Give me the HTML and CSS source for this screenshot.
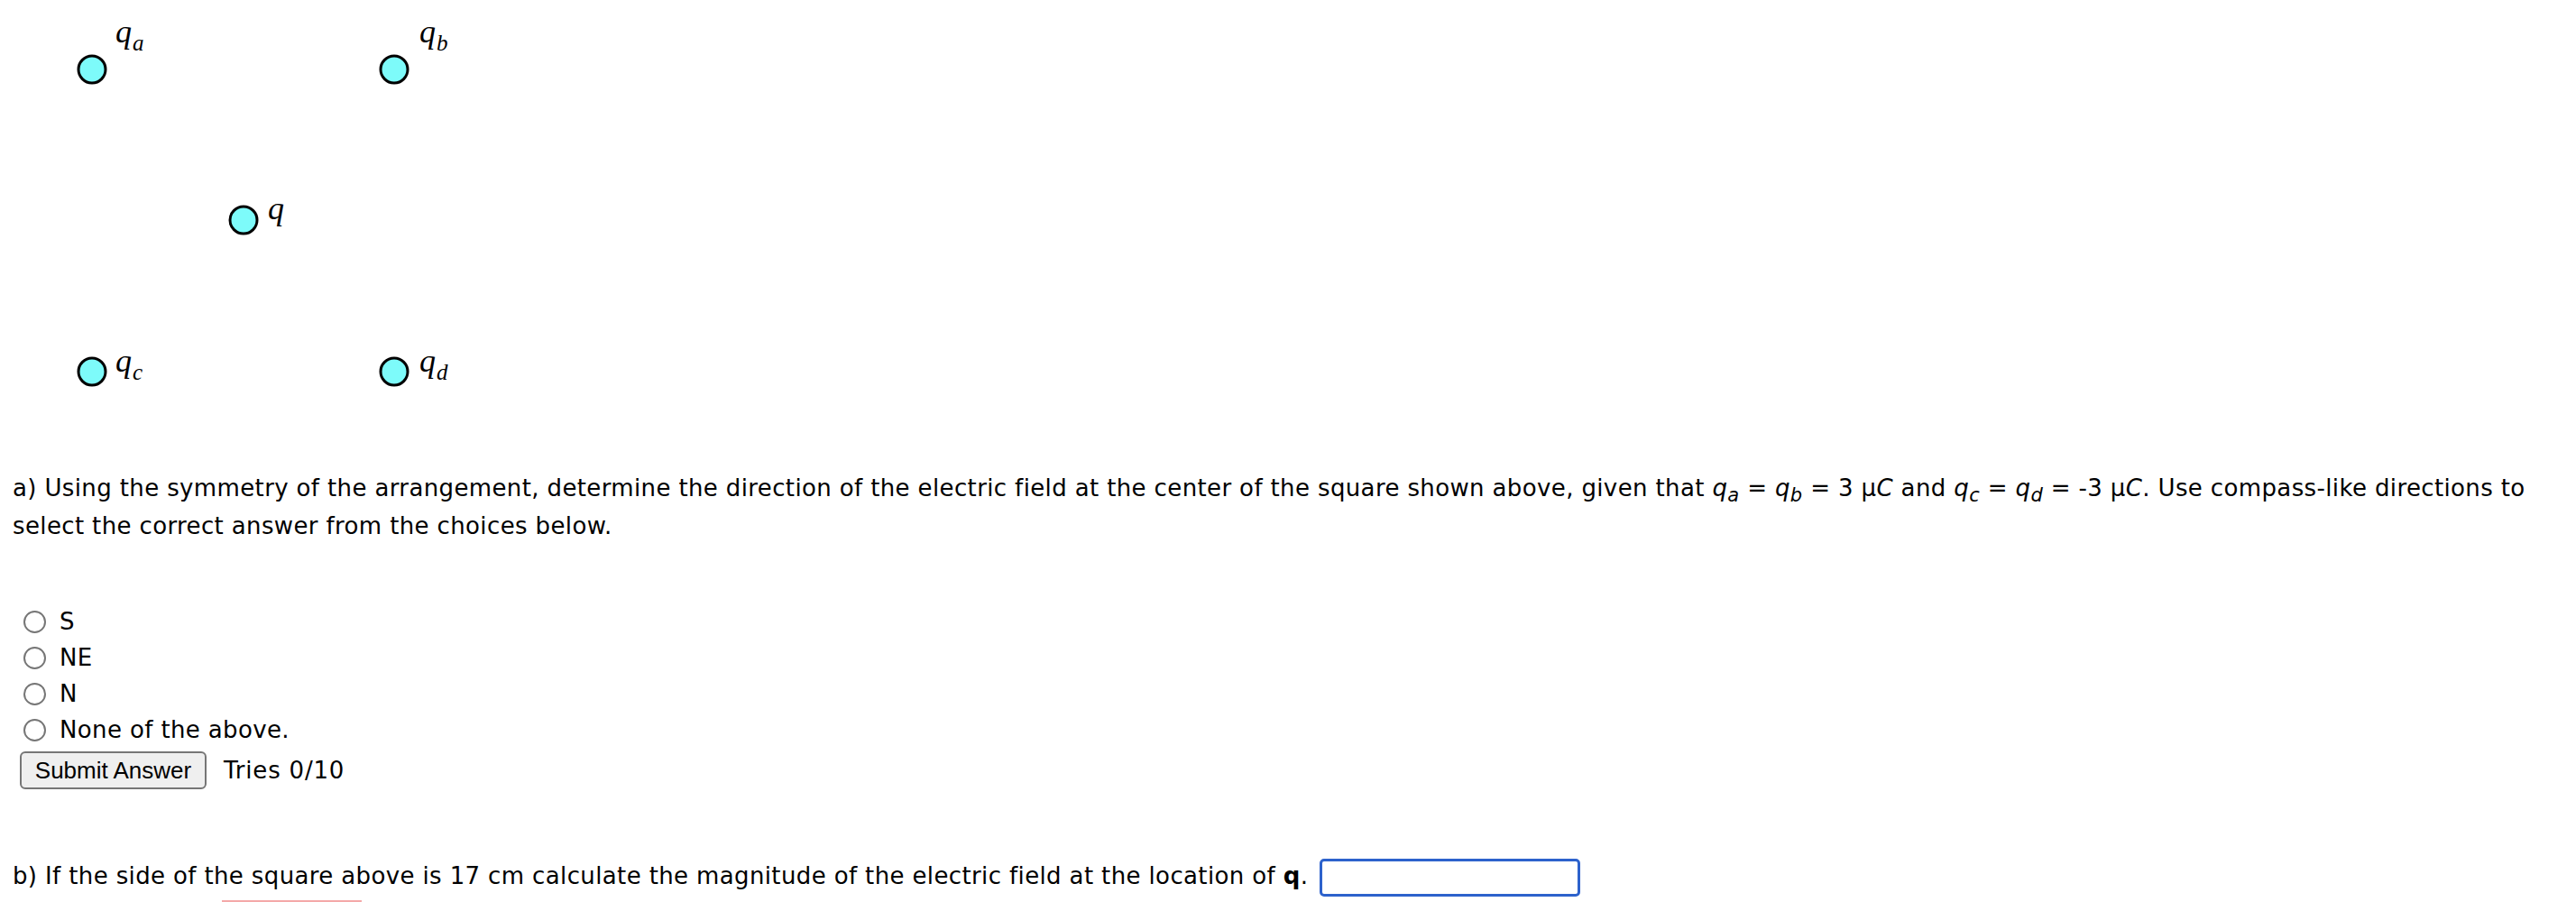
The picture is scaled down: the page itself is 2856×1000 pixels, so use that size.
FILE: index.html
```html
<!DOCTYPE html>
<html lang="en">
<head>
<meta charset="utf-8">
<title>Electric field at the center of a square</title>
<link rel="stylesheet" href="styles.css">
</head>
<body>
<div class="page">
  <div class="diagram">
    <span class="charge charge-a"></span>
    <span class="label label-a"><i>q</i><sub>a</sub></span>
    <span class="charge charge-b"></span>
    <span class="label label-b"><i>q</i><sub>b</sub></span>
    <span class="charge charge-q"></span>
    <span class="label label-q"><i>q</i></span>
    <span class="charge charge-c"></span>
    <span class="label label-c"><i>q</i><sub>c</sub></span>
    <span class="charge charge-d"></span>
    <span class="label label-d"><i>q</i><sub>d</sub></span>
  </div>

  <p class="question part-a">a) Using the symmetry of the arrangement, determine the direction of the electric field at the center of the square shown above, given that <i>q<sub>a</sub></i> = <i>q<sub>b</sub></i> = 3 μ<i>C</i> and <i>q<sub>c</sub></i> = <i>q<sub>d</sub></i> = -3 μ<i>C</i>. Use compass-like directions to select the correct answer from the choices below.</p>

  <ul class="choices">
    <li class="choice"><span class="radio"></span><span class="choice-text">S</span></li>
    <li class="choice"><span class="radio"></span><span class="choice-text">NE</span></li>
    <li class="choice"><span class="radio"></span><span class="choice-text">N</span></li>
    <li class="choice"><span class="radio"></span><span class="choice-text">None of the above.</span></li>
  </ul>

  <div class="submit-row">
    <button class="submit" type="button">Submit Answer</button>
    <span class="tries">Tries 0/10</span>
  </div>

  <p class="question part-b">b) If the side of the square above is 17 cm calculate the magnitude of the electric field at the location of <b>q</b>. <input class="answer" type="text"></p>

  <div class="feedback-bar"></div>
</div>
</body>
</html>
```

FILE: styles.css
```css
html, body {
  margin: 0;
  padding: 0;
  background: #ffffff;
}

body {
  color: #000000;
  font-family: "DejaVu Sans", Verdana, sans-serif;
  font-size: 26px;
  letter-spacing: 0.37px;
  overflow: hidden;
}

.page {
  padding: 0 14px;
}

/* ---------- diagram ---------- */
.diagram {
  position: relative;
  width: 520px;
  height: 490px;
  letter-spacing: normal;
}

.charge {
  position: absolute;
  width: 27px;
  height: 27px;
  border: 3px solid #000000;
  border-radius: 50%;
  background: #7dfbfa;
  transform: translate(-50%, -50%);
}

.charge-a { left: 88px;  top: 77px; }
.charge-b { left: 423px; top: 77px; }
.charge-q { left: 256px; top: 244px; }
.charge-c { left: 88px;  top: 412px; }
.charge-d { left: 423px; top: 412px; }

.label {
  position: absolute;
  font-family: "Liberation Serif", "Times New Roman", serif;
  font-size: 36px;
  line-height: 36px;
  white-space: nowrap;
}

.label i {
  font-style: italic;
}

.label sub {
  font-family: "Liberation Serif", "Times New Roman", serif;
  font-style: italic;
  font-size: 25px;
  line-height: 0;
  vertical-align: -9px;
  margin-left: 1px;
}

.label-a { left: 114px; top: 17px; }
.label-b { left: 451px; top: 17px; }
.label-q { left: 283px; top: 213px; }
.label-c { left: 114px; top: 382px; }
.label-d { left: 451px; top: 382px; }

/* ---------- question text ---------- */
.question {
  margin: 0;
  line-height: 42px;
}

.question sub {
  font-size: 21px;
  line-height: 0;
  vertical-align: -6px;
}

.part-a {
  margin-top: 30px;
}

/* ---------- choices ---------- */
.choices {
  list-style: none;
  margin: 65px 0 0;
  padding: 0;
}

.choice {
  display: flex;
  align-items: center;
  height: 40px;
}

.radio {
  box-sizing: border-box;
  width: 25px;
  height: 25px;
  margin-left: 12px;
  margin-right: 15px;
  border: 2px solid #767676;
  border-radius: 50%;
  background: #ffffff;
  flex: none;
}

.choice-text {
  line-height: 40px;
}

/* ---------- submit row ---------- */
.submit-row {
  display: flex;
  align-items: center;
  margin-top: 4px;
  height: 42px;
}

.submit {
  box-sizing: border-box;
  margin: 0 0 0 8px;
  width: 207px;
  height: 42px;
  padding: 0;
  font-family: "Liberation Sans", Arial, Helvetica, sans-serif;
  font-size: 26px;
  letter-spacing: normal;
  color: #000000;
  background: #efefef;
  border: 2px solid #767676;
  border-radius: 6px;
}

.tries {
  margin-left: 19px;
  letter-spacing: 0.8px;
}

/* ---------- part b ---------- */
.part-b {
  margin-top: 75px;
}

.answer {
  box-sizing: border-box;
  width: 289px;
  height: 42px;
  margin: 0 0 0 4px;
  padding: 0 8px;
  vertical-align: middle;
  font-family: "DejaVu Sans", Verdana, sans-serif;
  font-size: 26px;
  border: 3px solid #2d62cc;
  border-radius: 5px;
  background: #ffffff;
  outline: none;
}

.feedback-bar {
  margin: 4px 0 0 232px;
  width: 155px;
  height: 6px;
  background: #f4a9a9;
}
```
